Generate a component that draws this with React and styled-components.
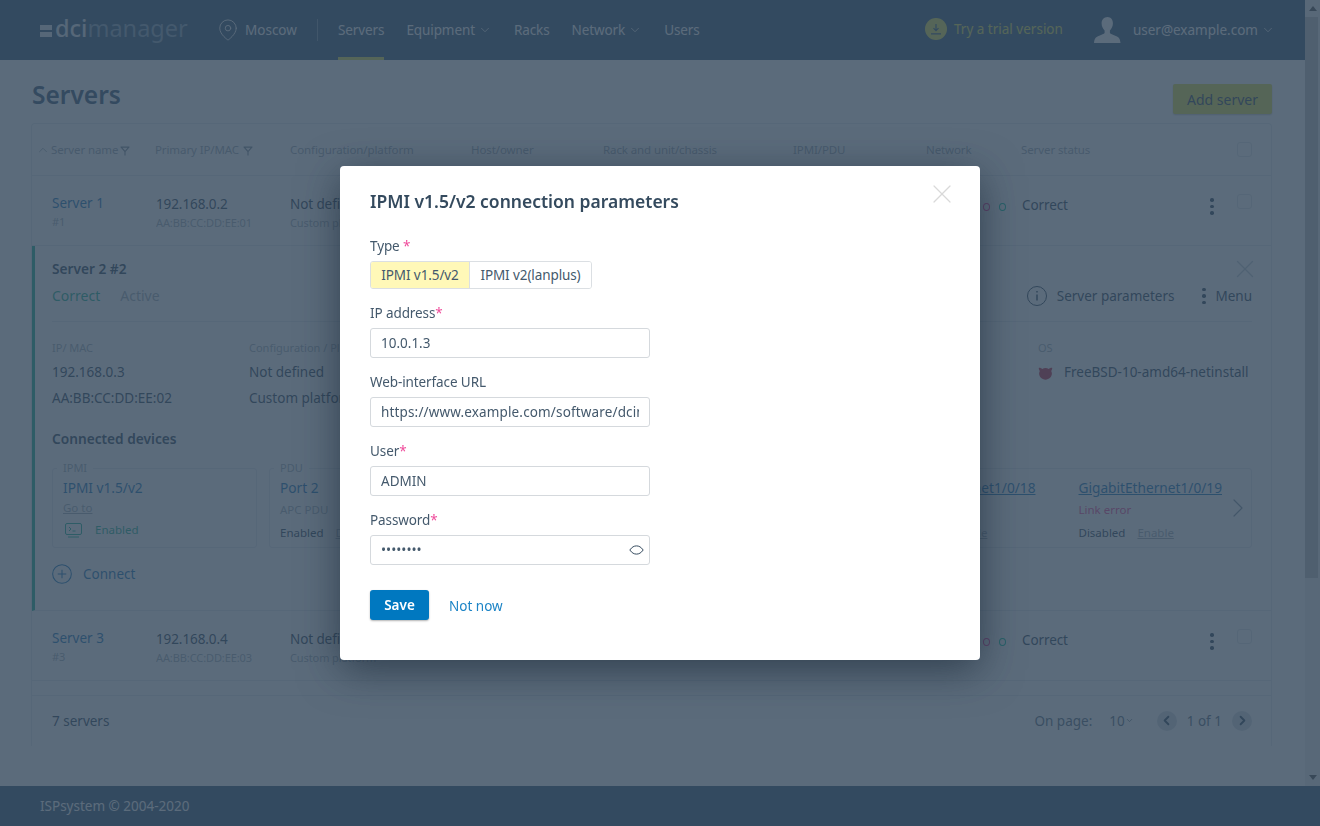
import React from "react";
import styled, { createGlobalStyle } from "styled-components";
import { FiMapPin, FiChevronDown, FiChevronUp, FiChevronLeft, FiChevronRight, FiX } from "react-icons/fi";

const FONT = `"Noto Sans", "Open Sans", sans-serif`;

const Global = createGlobalStyle`
  html, body { margin: 0; height: 100%; overflow: hidden; }
  body { font-family: ${FONT}; font-size: 14px; color: #344a5e; background: #fff; }
  * { box-sizing: border-box; }
`;

const Page = styled.div`
  display: flex;
  flex-direction: column;
  height: 826px;
`;

const Body = styled.div`
  display: flex;
  height: 786px;
  flex: none;
`;

const Main = styled.div`
  flex: 1;
  min-width: 0;
  overflow: hidden;
`;

const ScrollBar = styled.div`
  flex: none;
  width: 15px;
  display: flex;
  flex-direction: column;
  background: #f1f1f1;
`;

const ScrollArrow = styled.div`
  height: 17px;
  flex: none;
  display: flex;
  align-items: center;
  justify-content: center;
  &::before {
    content: "";
    border-left: 4px solid transparent;
    border-right: 4px solid transparent;
    ${(p) => (p.$down ? "border-top: 5px solid #505050;" : "border-bottom: 5px solid #505050;")}
  }
`;

const ScrollThumb = styled.div`
  width: 13px;
  height: 561px;
  flex: none;
  background: #c1c1c1;
`;

const ScrollRest = styled.div`
  flex: 1;
`;

const Header = styled.header`
  height: 60px;
  background: #375a78;
  display: flex;
  align-items: center;
  padding: 0 30px 0 40px;
  color: #fff;
`;

const Logo = styled.div`
  display: flex;
  align-items: center;
  width: 177px;
  font-size: 23.5px;
  font-weight: 400;
  line-height: 1;
  padding-bottom: 2px;
  b { font-weight: 500; color: #e3eaf0; }
  span { color: #8aa3b8; }
`;

const LogoMark = styled.i`
  display: flex;
  flex-direction: column;
  gap: 2px;
  margin: 3px 3px 0 0;
  &::before, &::after {
    content: "";
    display: block;
    width: 12px;
    height: 5px;
    background: #e3eaf0;
  }
`;

const Place = styled.div`
  display: flex;
  align-items: center;
  gap: 6px;
  height: 22px;
  padding-right: 20px;
  border-right: 1px solid #7d96ab;
  font-size: 13.5px;
  color: #fff;
  width: 101px;
  white-space: nowrap;
`;

const Nav = styled.nav`
  display: flex;
  align-items: stretch;
  align-self: stretch;
  margin-left: 20px;
  gap: 22px;
`;

const NavItem = styled.div`
  display: flex;
  align-items: center;
  gap: 3px;
  font-size: 13.5px;
  letter-spacing: -0.1px;
  border-bottom: 3px solid ${(p) => (p.$active ? "#e2e250" : "transparent")};
  border-top: 3px solid transparent;
`;

const HeaderRight = styled.div`
  margin-left: auto;
  display: flex;
  align-items: center;
`;

const Trial = styled.div`
  display: flex;
  align-items: center;
  gap: 7px;
  color: #e2e250;
  font-size: 13.5px;
  margin-right: 31px;
  padding-bottom: 2px;
`;

const TrialIcon = styled.span`
  width: 22px;
  height: 22px;
  border-radius: 50%;
  background: #e2e250;
  display: flex;
  align-items: center;
  justify-content: center;
`;

const UserBox = styled.div`
  display: flex;
  align-items: center;
  gap: 12px;
  font-size: 13.5px;
`;

const UserName = styled.span`
  display: flex;
  align-items: center;
  gap: 3px;
`;

const Content = styled.main`
  padding: 24px 33px 0 31px;
`;

const TitleRow = styled.div`
  display: flex;
  justify-content: space-between;
  align-items: flex-start;
  height: 39px;
`;

const Title = styled.h1`
  margin: 0 0 0 1px;
  font-size: 24.5px;
  line-height: 21px;
  font-weight: 600;
  color: #3c5a78;
`;

const AddButton = styled.button`
  width: 99px;
  height: 30px;
  border: 0;
  border-radius: 2px;
  background: #e0e04a;
  color: #344a5e;
  font: 400 14px ${FONT};
  box-shadow: 0 1px 2px rgba(0, 0, 0, 0.25);
  padding: 0;
`;

const Card = styled.section`
  border: 1px solid #e4e9ed;
  border-bottom: 0;
  border-radius: 4px 4px 0 0;
  height: 623px;
  overflow: hidden;
`;

const TableHead = styled.div`
  display: grid;
  grid-template-columns: 119px 135px 181px 132px 190px 133px 95px 1fr 27px 34px;
  align-items: center;
  height: 52px;
  padding-left: 4px;
  border-bottom: 1px solid #e4e9ed;
  font-size: 11.5px;
  letter-spacing: -0.1px;
  color: #9eaab5;
`;

const HeadCell = styled.div`
  display: flex;
  align-items: center;
  gap: ${(p) => (p.$tight ? 1 : 3)}px;
  white-space: nowrap;
`;

const FilterMark = styled.svg`
  width: 10px;
  height: 10px;
  margin-top: 2px;
  margin-left: 1px;
`;

const Check = styled.span`
  width: 15px;
  height: 15px;
  border: 1px solid #dfe4e8;
  border-radius: 3px;
  display: block;
`;

const Row = styled.div`
  display: grid;
  grid-template-columns: 104px 134px 181px 133px 190px 133px 95px 1fr 27px 34px;
  height: 70px;
  padding: 18px 0 0 20px;
  border-bottom: 1px solid #e4e9ed;
`;

const Cell = styled.div`
  white-space: nowrap;
  line-height: 20px;
  overflow: hidden;
`;

const StatusCell = styled(Cell)`
  padding-top: 1px;
`;

const RowLink = styled.div`
  font-size: 13.5px;
  margin: -1px 0 1px;
  color: #1c78ba;
`;

const RowMain = styled.div`
  font-size: 13.5px;
  letter-spacing: -0.1px;
  color: #344a5e;
`;

const RowSub = styled.div`
  font-size: 11px;
  line-height: 16px;
  margin-top: 1px;
  letter-spacing: -0.1px;
  color: #a5b0ba;
`;

const Dots = styled.div`
  display: flex;
  gap: 9px;
  padding: 9px 0 0 8px;
`;

const Dot = styled.i`
  flex: none;
  width: 7px;
  height: 8px;
  border-radius: 50%;
  border: 1.5px solid ${(p) => p.$color};
`;

const Kebab = styled.span`
  display: flex;
  flex-direction: column;
  gap: 3px;
  width: 4px;
  margin-top: ${(p) => p.$top || 0}px;
  i {
    width: 3.5px;
    height: 3.5px;
    border-radius: 50%;
    background: #344a5e;
  }
`;

const Details = styled.div`
  position: relative;
  height: 365px;
  border-left: 3px solid #1fb394;
  border-bottom: 1px solid #e4e9ed;
  padding: 13px 19px 0 17px;
`;

const DetailClose = styled.span`
  position: absolute;
  right: 11px;
  top: 8px;
  color: #c3ccd4;
  line-height: 0;
`;

const DetailTop = styled.div`
  height: 63px;
  border-bottom: 1px solid #e4e9ed;
  display: flex;
  justify-content: space-between;
`;

const DetailName = styled.div`
  font-size: 13.7px;
  font-weight: 600;
  line-height: 20px;
  color: #344a5e;
`;

const Status = styled.div`
  display: flex;
  gap: 20px;
  margin-top: 7px;
  font-size: 14px;
  line-height: 20px;
`;

const StatusText = styled.span`
  color: ${(p) => p.$color};
`;

const DetailActions = styled.div`
  display: flex;
  align-items: center;
  height: 22px;
  margin-top: 26px;
  font-size: 13.5px;
  color: #344a5e;
`;

const ActionIcon = styled.span`
  line-height: 0;
  margin-right: ${(p) => p.$gap}px;
`;

const ActionLabel = styled.span`
  margin-right: ${(p) => p.$gap || 0}px;
`;

const InfoGrid = styled.div`
  display: grid;
  grid-template-columns: 197px 789px 1fr;
  padding-top: 18px;
`;

const InfoLabel = styled.div`
  font-size: 11px;
  line-height: 16px;
  color: #a5b0ba;
  margin-bottom: 3px;
`;

const InfoLine = styled.div`
  font-size: 13.5px;
  line-height: 26px;
  white-space: nowrap;
  color: #344a5e;
  display: flex;
  align-items: center;
  gap: 11px;
`;

const SectionTitle = styled.div`
  font-size: 13.7px;
  font-weight: 600;
  line-height: 20px;
  margin-top: 18px;
  color: #344a5e;
`;

const Devices = styled.div`
  display: flex;
  gap: 12px;
  margin-top: 19px;
`;

const Device = styled.fieldset`
  position: relative;
  height: 80px;
  width: ${(p) => p.$width}px;
  flex: ${(p) => (p.$grow ? "1" : "none")};
  margin: 0;
  padding: 9px 0 0 10px;
  border: 1px solid #e4e9ed;
  border-radius: 3px;
  min-width: 0;
`;

const DeviceLegend = styled.legend`
  position: absolute;
  top: -9px;
  left: 4px;
  padding: 0 6px;
  background: #fff;
  font-size: 11px;
  line-height: 16px;
  color: #a5b0ba;
`;

const PortsWrap = styled.div`
  display: flex;
  justify-content: flex-end;
  gap: 43px;
  padding-right: 29px;
`;

const Port = styled.div``;

const DeviceLink = styled.div`
  font-size: 13.7px;
  line-height: 20px;
  white-space: nowrap;
  color: #1c78ba;
  text-decoration: ${(p) => (p.$underline ? "underline" : "none")};
`;

const GoTo = styled.div`
  font-size: 11.5px;
  line-height: 15px;
  margin-top: 2px;
  color: #a5b0ba;
  text-decoration: underline;
`;

const DeviceState = styled.div`
  display: flex;
  align-items: center;
  gap: 12px;
  font-size: 11.5px;
  line-height: 16px;
  margin-top: ${(p) => p.$top || 8}px;
  white-space: nowrap;
  color: ${(p) => p.$color || "#344a5e"};
`;

const ConsoleIcon = styled.svg`
  margin-left: 1px;
`;

const Muted = styled.span`
  color: #a5b0ba;
  text-decoration: underline;
`;

const DeviceSub = styled.div`
  font-size: 11.5px;
  line-height: 15px;
  margin-top: 4px;
  color: ${(p) => p.$color || "#a5b0ba"};
`;

const NextArrow = styled.span`
  position: absolute;
  right: -3px;
  top: 23px;
  line-height: 0;
  color: #8796a3;
`;

const ConnectRow = styled.div`
  display: flex;
  align-items: center;
  gap: 11px;
  margin-top: 16px;
  font-size: 13.5px;
  color: #1c78ba;
`;

const TableFooter = styled.div`
  display: flex;
  align-items: center;
  justify-content: space-between;
  height: 50px;
  margin-top: 14px;
  padding: 0 19px 0 20px;
  border-top: 1px solid #e4e9ed;
  font-size: 13.5px;
`;

const Paging = styled.div`
  display: flex;
  align-items: center;
  color: #5b6f82;
  font-size: 13.5px;
`;

const PerPage = styled.span`
  display: flex;
  align-items: center;
  margin: 0 23px 0 17px;
`;

const PageButton = styled.span`
  width: 20px;
  height: 20px;
  border-radius: 50%;
  background: #d5dce2;
  color: #344a5e;
  display: flex;
  align-items: center;
  justify-content: center;
`;

const PageCount = styled.span`
  margin: 0 10px;
`;

const Copyright = styled.footer`
  height: 40px;
  flex: none;
  background: #375a78;
  color: #fff;
  display: flex;
  align-items: center;
  padding: 0 40px;
  font-size: 13.5px;
`;

const Overlay = styled.div`
  position: fixed;
  inset: 0;
  background: rgba(50, 70, 90, 0.8);
  display: flex;
  align-items: flex-start;
  justify-content: center;
  padding-top: 166px;
`;

const Modal = styled.div`
  position: relative;
  width: 640px;
  height: 494px;
  background: #fff;
  border-radius: 4px;
  padding: 24px 30px 0;
  box-shadow: 0 10px 40px rgba(20, 35, 50, 0.6);
  color: #344a5e;
`;

const CloseButton = styled.span`
  position: absolute;
  right: 22px;
  top: 12px;
  line-height: 0;
  color: #d9d9d9;
`;

const ModalTitle = styled.h2`
  margin: 0 0 25px;
  font-size: 17.5px;
  line-height: 22px;
  font-weight: 600;
  color: #344a5e;
`;

const Field = styled.div`
  margin-bottom: 15px;
`;

const Label = styled.div`
  font-size: 13.5px;
  line-height: 18px;
  margin-bottom: 6px;
  letter-spacing: -0.1px;
  color: #44596c;
`;

const Req = styled.span`
  color: #ef4a9a;
`;

const Toggle = styled.div`
  display: flex;
  width: fit-content;
  height: 28px;
  border: 1px solid #dbdfe3;
  border-radius: 3px;
  overflow: hidden;
`;

const ToggleItem = styled.div`
  display: flex;
  align-items: center;
  justify-content: center;
  width: ${(p) => p.$width}px;
  font-size: 13.5px;
  letter-spacing: -0.1px;
  color: #44596c;
  background: ${(p) => (p.$active ? "#fff8b8" : "#fff")};
  border-right: ${(p) => (p.$active ? "1px solid #dbdfe3" : "0")};
`;

const InputBox = styled.div`
  position: relative;
  width: 280px;
  height: 30px;
`;

const Input = styled.input`
  width: 100%;
  height: 100%;
  border: 1px solid #d5d9dd;
  border-radius: 3px;
  padding: 0 ${(p) => (p.$pad ? 30 : 10)}px 0 10px;
  font: 400 13.5px ${FONT};
  color: #44596c;
  outline: none;
  background: #fff;
`;

const UrlInput = styled(Input)`
  letter-spacing: 0.15px;
`;

const EyeIcon = styled.svg`
  position: absolute;
  right: 6px;
  top: 10px;
  width: 15px;
  height: 10px;
`;

const Buttons = styled.div`
  display: flex;
  align-items: center;
  margin-top: 25px;
`;

const SaveButton = styled.button`
  width: 59px;
  height: 30px;
  padding: 0;
  border: 0;
  border-radius: 3px;
  background: #0078c0;
  color: #fff;
  font: 600 13.5px ${FONT};
  box-shadow: 0 1px 2px rgba(0, 0, 0, 0.3);
`;

const LinkButton = styled.span`
  margin-left: 20px;
  padding-top: 2px;
  font-size: 13.5px;
  color: #1c84c6;
`;

function Filter() {
  return (
    <FilterMark viewBox="0 0 9 9" fill="none" stroke="#7f8d9a" strokeWidth="1">
      <path d="M0.5 1h8M1 1l3.5 4v3.500M8 1L4.500 5" />
    </FilterMark>
  );
}

function KebabIcon({ top }) {
  return (
    <Kebab $top={top}>
      <i />
      <i />
      <i />
    </Kebab>
  );
}

function ServerRow({ name, num, ip, mac }) {
  return (
    <Row>
      <Cell>
        <RowLink>{name}</RowLink>
        <RowSub>#{num}</RowSub>
      </Cell>
      <Cell>
        <RowMain>{ip}</RowMain>
        <RowSub>{mac}</RowSub>
      </Cell>
      <Cell>
        <RowMain>Not defined</RowMain>
        <RowSub>Custom platform</RowSub>
      </Cell>
      <Cell />
      <Cell />
      <Cell />
      <Cell>
        <Dots>
          <Dot $color="#00c8a0" />
          <Dot $color="#00c8a0" />
          <Dot $color="#00c8a0" />
          <Dot $color="#ff2f9a" />
          <Dot $color="#00c8a0" />
        </Dots>
      </Cell>
      <StatusCell>
        <RowMain>Correct</RowMain>
      </StatusCell>
      <Cell>
        <KebabIcon top={4} />
      </Cell>
      <Cell>
        <Check />
      </Cell>
    </Row>
  );
}

export default function App() {
  return (
    <Page>
      <Global />
      <Body>
        <Main>
          <Header>
            <Logo>
              <LogoMark />
              <b>dci</b>
              <span>manager</span>
            </Logo>
            <Place>
              <FiMapPin size={22} strokeWidth={1} />
              Moscow
            </Place>
            <Nav>
              <NavItem $active>Servers</NavItem>
              <NavItem>
                Equipment <FiChevronDown size={14} strokeWidth={1.3} />
              </NavItem>
              <NavItem>Racks</NavItem>
              <NavItem>
                Network <FiChevronDown size={14} strokeWidth={1.3} />
              </NavItem>
              <NavItem>Users</NavItem>
            </Nav>
            <HeaderRight>
              <Trial>
                <TrialIcon>
                  <svg width="12" height="12" viewBox="0 0 12 12" fill="none" stroke="#375a78" strokeWidth="1.2">
                    <path d="M6 1v6.500M3.500 5.200L6 7.700l2.500-2.500M1 10.800h10" />
                  </svg>
                </TrialIcon>
                Try a trial version
              </Trial>
              <UserBox>
                <svg width="27" height="28" viewBox="0 0 27 28" fill="#fff">
                  <path d="M13.500 1c3.400 0 5.400 2.800 5.400 6.300 0 3-1.300 5.500-3 7.200v2.200c0 1 3.300 2 6.600 3.600 2.600 1.200 3.500 2.600 4 6.700H0c.5-4.100 1.400-5.500 4-6.700 3.300-1.600 6.600-2.600 6.600-3.600v-2.200c-1.700-1.700-3-4.200-3-7.200C7.600 3.800 10.100 1 13.500 1z" />
                </svg>
                <UserName>
                  user@example.com <FiChevronDown size={14} strokeWidth={1.3} />
                </UserName>
              </UserBox>
            </HeaderRight>
          </Header>
          <Content>
            <TitleRow>
              <Title>Servers</Title>
              <AddButton>Add server</AddButton>
            </TitleRow>
            <Card>
              <TableHead>
                <HeadCell $tight>
                  <FiChevronUp size={14} strokeWidth={1.5} /> Server name <Filter />
                </HeadCell>
                <HeadCell>
                  Primary IP/MAC <Filter />
                </HeadCell>
                <HeadCell>Configuration/platform</HeadCell>
                <HeadCell>Host/owner</HeadCell>
                <HeadCell>Rack and unit/chassis</HeadCell>
                <HeadCell>IPMI/PDU</HeadCell>
                <HeadCell>Network</HeadCell>
                <HeadCell>Server status</HeadCell>
                <HeadCell />
                <HeadCell>
                  <Check />
                </HeadCell>
              </TableHead>
              <ServerRow name="Server 1" num="1" ip="192.168.0.2" mac="AA:BB:CC:DD:EE:01" />
              <Details>
                <DetailClose>
                  <FiX size={30} strokeWidth={1.1} />
                </DetailClose>
                <DetailTop>
                  <div>
                    <DetailName>Server 2 #2</DetailName>
                    <Status>
                      <StatusText $color="#1fb394">Correct</StatusText>
                      <StatusText $color="#a5b0ba">Active</StatusText>
                    </Status>
                  </div>
                  <DetailActions>
                    <ActionIcon $gap={10}>
                      <svg width="20" height="20" viewBox="0 0 20 20" fill="none" stroke="#344a5e" strokeWidth="1">
                        <circle cx="10" cy="10" r="9.500" />
                        <path d="M10 8.500v6" strokeWidth="1.500" />
                        <path d="M10 5v1.600" strokeWidth="1.500" />
                      </svg>
                    </ActionIcon>
                    <ActionLabel $gap={28}>Server parameters</ActionLabel>
                    <ActionIcon $gap={9}>
                      <KebabIcon />
                    </ActionIcon>
                    <ActionLabel>Menu</ActionLabel>
                  </DetailActions>
                </DetailTop>
                <InfoGrid>
                  <div>
                    <InfoLabel>IP/ MAC</InfoLabel>
                    <InfoLine>192.168.0.3</InfoLine>
                    <InfoLine>AA:BB:CC:DD:EE:02</InfoLine>
                  </div>
                  <div>
                    <InfoLabel>Configuration / Platform</InfoLabel>
                    <InfoLine>Not defined</InfoLine>
                    <InfoLine>Custom platform</InfoLine>
                  </div>
                  <div>
                    <InfoLabel>OS</InfoLabel>
                    <InfoLine>
                      <svg width="15" height="15" viewBox="0 0 15 15" fill="#c22c47">
                        <path d="M7.500 3c1.200 0 2.300.3 3.200.9.800-.7 2.600-1.600 3.400-1.100.5.400-.3 2.300-.9 3.300.4.800.7 1.600.7 2.500 0 3.300-2.800 6.100-6.400 6.100S1.100 11.900 1.100 8.600c0-.9.300-1.800.7-2.500C1.200 5.100.4 3.200.9 2.800c.8-.5 2.600.4 3.400 1.100.9-.6 2-.9 3.200-.9z" />
                      </svg>
                      FreeBSD-10-amd64-netinstall
                    </InfoLine>
                  </div>
                </InfoGrid>
                <SectionTitle>Connected devices</SectionTitle>
                <Devices>
                  <Device $width={205}>
                    <DeviceLegend>IPMI</DeviceLegend>
                    <DeviceLink>IPMI v1.5/v2</DeviceLink>
                    <GoTo>Go to</GoTo>
                    <DeviceState $color="#1fb394" $top={7}>
                      <ConsoleIcon width="19" height="15" viewBox="0 0 19 15" fill="none" stroke="#1fb394" strokeWidth="1">
                        <rect x="1.500" y="0.500" width="16" height="11" rx="1.500" />
                        <path d="M5 4l2 2-2 2M8.500 8h3M4 14h11" />
                      </ConsoleIcon>
                      Enabled
                    </DeviceState>
                  </Device>
                  <Device $width={200}>
                    <DeviceLegend>PDU</DeviceLegend>
                    <DeviceLink>Port 2</DeviceLink>
                    <DeviceSub>APC PDU</DeviceSub>
                    <DeviceState>
                      Enabled <Muted>Disable</Muted>
                    </DeviceState>
                  </Device>
                  <Device $grow>
                    <PortsWrap>
                      <Port>
                        <DeviceLink $underline>GigabitEthernet1/0/18</DeviceLink>
                        <DeviceSub>Link is OK</DeviceSub>
                        <DeviceState>
                          Enabled <Muted>Disable</Muted>
                        </DeviceState>
                      </Port>
                      <Port>
                        <DeviceLink $underline>GigabitEthernet1/0/19</DeviceLink>
                        <DeviceSub $color="#ef4a9a">Link error</DeviceSub>
                        <DeviceState>
                          Disabled <Muted>Enable</Muted>
                        </DeviceState>
                      </Port>
                    </PortsWrap>
                    <NextArrow>
                      <FiChevronRight size={32} strokeWidth={0.9} />
                    </NextArrow>
                  </Device>
                </Devices>
                <ConnectRow>
                  <svg width="20" height="20" viewBox="0 0 21 21" fill="none" stroke="#1c78ba" strokeWidth="1.1">
                    <circle cx="10.500" cy="10.500" r="9.800" />
                    <path d="M10.500 6v9M6 10.500h9" />
                  </svg>
                  Connect
                </ConnectRow>
              </Details>
              <ServerRow name="Server 3" num="3" ip="192.168.0.4" mac="AA:BB:CC:DD:EE:03" />
              <TableFooter>
                <span>7 servers</span>
                <Paging>
                  On page:
                  <PerPage>
                    10
                    <FiChevronDown size={9} />
                  </PerPage>
                  <PageButton>
                    <FiChevronLeft size={15} strokeWidth={3} />
                  </PageButton>
                  <PageCount>1 of 1</PageCount>
                  <PageButton>
                    <FiChevronRight size={15} strokeWidth={3} />
                  </PageButton>
                </Paging>
              </TableFooter>
            </Card>
          </Content>
        </Main>
        <ScrollBar>
          <ScrollArrow />
          <ScrollThumb />
          <ScrollRest />
          <ScrollArrow $down />
        </ScrollBar>
      </Body>
      <Copyright>ISPsystem © 2004-2020</Copyright>
      <Overlay>
        <Modal>
          <CloseButton>
            <FiX size={32} strokeWidth={0.9} />
          </CloseButton>
          <ModalTitle>IPMI v1.5/v2 connection parameters</ModalTitle>
          <Field>
            <Label>
              Type <Req>*</Req>
            </Label>
            <Toggle>
              <ToggleItem $active $width={99}>IPMI v1.5/v2</ToggleItem>
              <ToggleItem $width={121}>IPMI v2(lanplus)</ToggleItem>
            </Toggle>
          </Field>
          <Field>
            <Label>
              IP address<Req>*</Req>
            </Label>
            <InputBox>
              <Input readOnly value="10.0.1.3" />
            </InputBox>
          </Field>
          <Field>
            <Label>Web-interface URL</Label>
            <InputBox>
              <UrlInput readOnly value="https://www.example.com/software/dcimanager" />
            </InputBox>
          </Field>
          <Field>
            <Label>
              User<Req>*</Req>
            </Label>
            <InputBox>
              <Input readOnly value="ADMIN" />
            </InputBox>
          </Field>
          <Field>
            <Label>
              Password<Req>*</Req>
            </Label>
            <InputBox>
              <Input readOnly $pad type="password" value="password" />
              <EyeIcon viewBox="0 0 15 10" fill="none" stroke="#344a5e" strokeWidth="1">
                <path d="M0.800 5C3 2 5 0.900 7.500 0.900S12 2 14.200 5C12 8 10 9.100 7.500 9.100S3 8 0.800 5z" />
              </EyeIcon>
            </InputBox>
          </Field>
          <Buttons>
            <SaveButton>Save</SaveButton>
            <LinkButton>Not now</LinkButton>
          </Buttons>
        </Modal>
      </Overlay>
    </Page>
  );
}
